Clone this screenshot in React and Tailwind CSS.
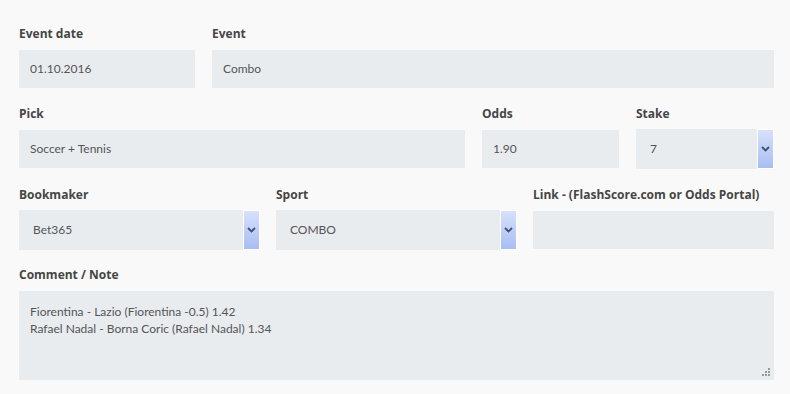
import React from "react";

const font = { fontFamily: "Lato, 'Open Sans', sans-serif" };

function Label({ children }) {
  return (
    <div
      className="h-[30px] pt-[6px] text-[12px] font-bold text-[#454545] leading-[16px]"
      style={{ fontFamily: "'Open Sans', sans-serif" }}
    >
      {children}
    </div>
  );
}

function Input({ value }) {
  return (
    <div className="h-[38px] bg-[#e9ecef] flex items-center px-[11px] text-[12px] text-[#555]">{value}</div>
  );
}

function Select({ value }) {
  return (
    <div className="h-[40px] -mt-[1px] bg-[#e9ecef] flex items-center pl-[14px] text-[12px] text-[#555]">
      <span className="flex-1">{value}</span>
      <div className="h-[40px] w-[17px] border border-white flex items-center justify-center bg-gradient-to-b from-[#d7e1fb] to-[#a9bdf2]">
        <svg width="9" height="6" viewBox="0 0 9 6">
          <path d="M1 1 L4.5 4.5 L8 1" stroke="#3f4f78" strokeWidth="1.8" fill="none" />
        </svg>
      </div>
    </div>
  );
}

export default function App() {
  return (
    <div className="w-[790px] h-[394px] bg-[#f9f9f9] pl-[19px] pr-[16px] pt-[20px]" style={font}>
      <div className="flex gap-[17px]">
        <div className="w-[176px]"><Label>Event date</Label><Input value="01.10.2016" /></div>
        <div className="flex-1"><Label>Event</Label><Input value="Combo" /></div>
      </div>
      <div className="flex gap-[17px] mt-[12px]">
        <div className="w-[446px]"><Label>Pick</Label><Input value="Soccer + Tennis" /></div>
        <div className="w-[137px]"><Label>Odds</Label><Input value="1.90" /></div>
        <div className="flex-1"><Label>Stake</Label><Select value="7" /></div>
      </div>
      <div className="flex gap-[16px] mt-[12px]">
        <div className="w-[241px]"><Label>Bookmaker</Label><Select value="Bet365" /></div>
        <div className="w-[241px]"><Label>Sport</Label><Select value="COMBO" /></div>
        <div className="flex-1"><Label>Link - (FlashScore.com or Odds Portal)</Label><Input value="" /></div>
      </div>
      <div className="mt-[11px]">
        <Label>Comment / Note</Label>
        <div className="h-[89px] bg-[#e9ecef] relative px-[11px] pt-[12px] text-[12px] text-[#555] leading-[17px]">
          <div>Fiorentina - Lazio (Fiorentina -0.5) 1.42</div>
          <div>Rafael Nadal - Borna Coric (Rafael Nadal) 1.34</div>
          <svg className="absolute right-[3px] bottom-[3px]" width="9" height="9" viewBox="0 0 9 9">
            <rect x="6" y="0" width="2" height="2" fill="#999" />
            <rect x="3" y="3" width="2" height="2" fill="#999" />
            <rect x="6" y="3" width="2" height="2" fill="#999" />
            <rect x="0" y="6" width="2" height="2" fill="#999" />
            <rect x="3" y="6" width="2" height="2" fill="#999" />
            <rect x="6" y="6" width="2" height="2" fill="#999" />
          </svg>
        </div>
      </div>
    </div>
  );
}
